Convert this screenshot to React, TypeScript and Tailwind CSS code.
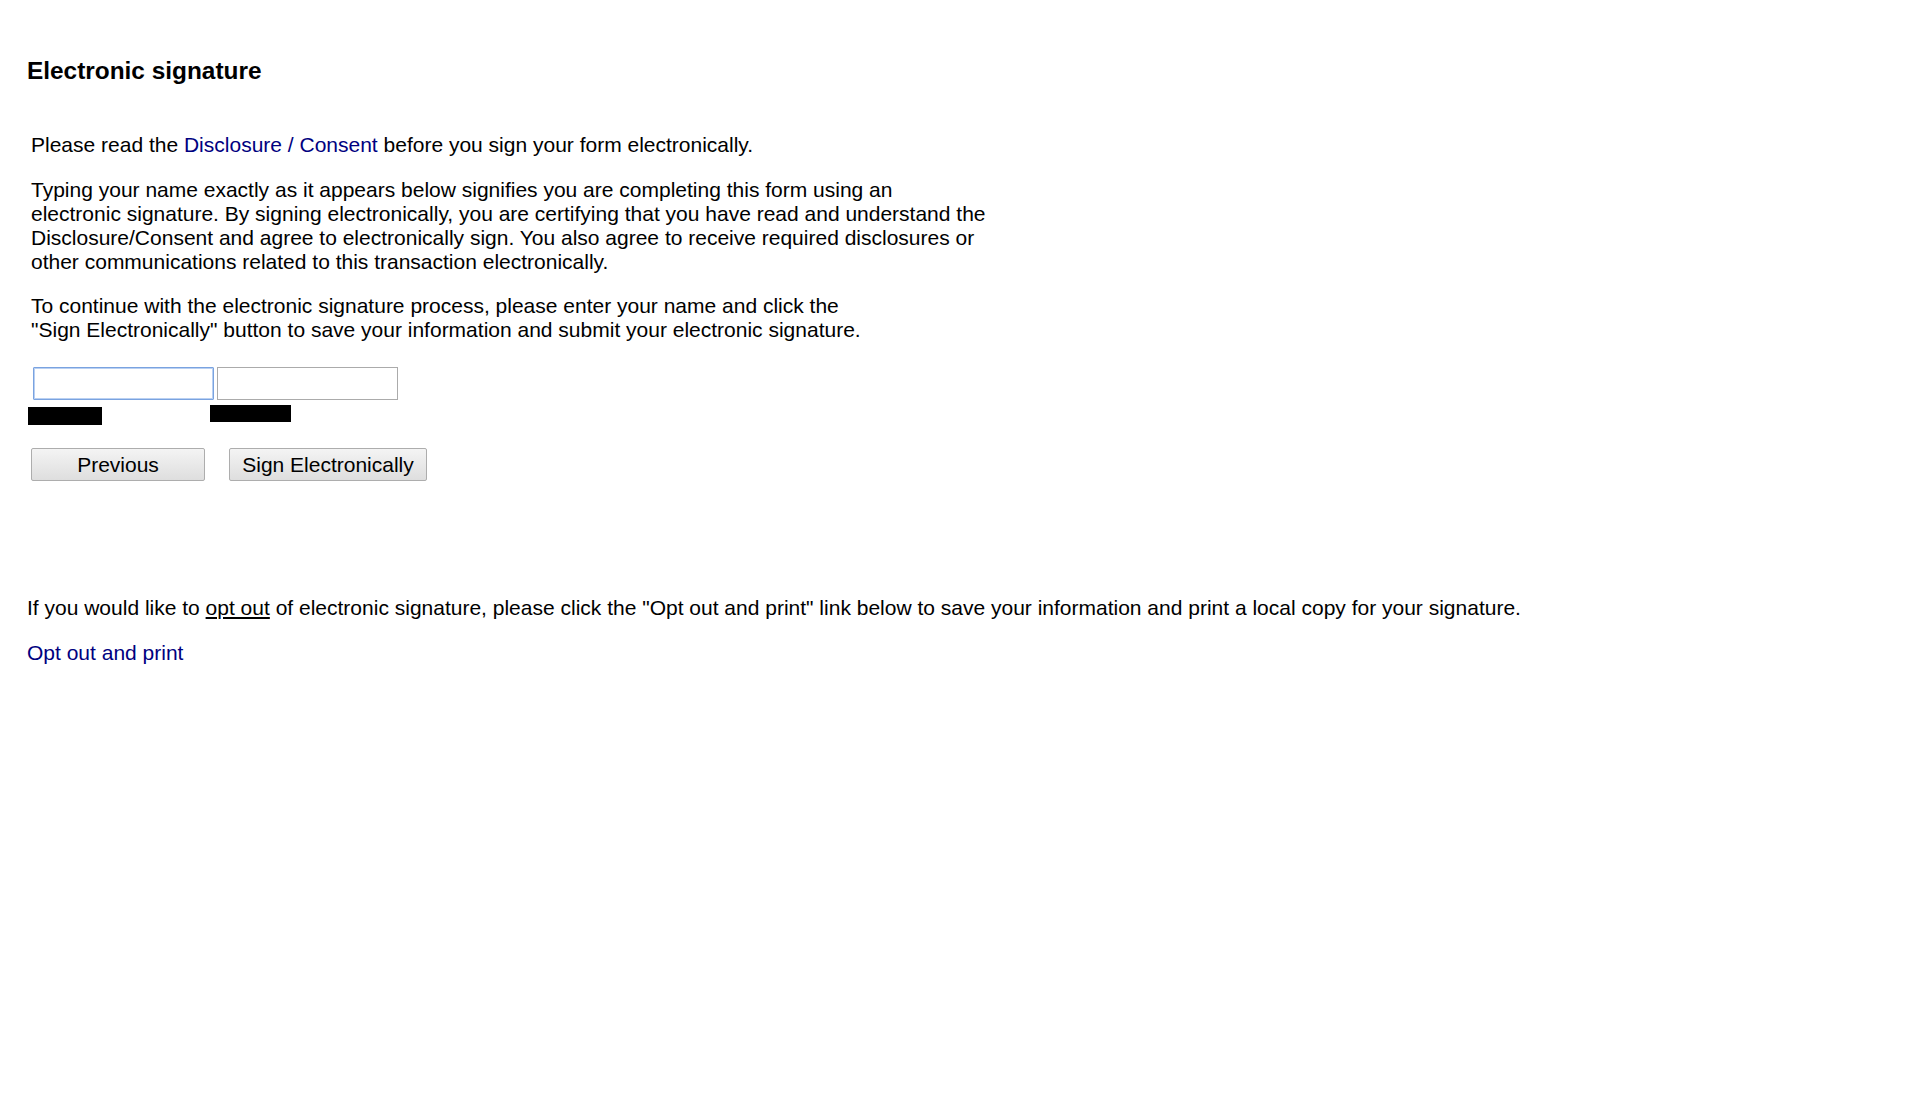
export default function App() {
  return (
    <div className="min-h-[1115px] bg-white text-black font-['Liberation_Sans',Arial,sans-serif] text-[21px] leading-[24px]">
      <div className="pl-[27px] pt-[57px]">
        <h2 className="text-[24.4px] leading-[28px] font-bold">Electronic signature</h2>

        <div className="pl-[4px] pt-[48px]">
          <p>
            Please read the{" "}
            <a className="text-[#000080]">Disclosure / Consent</a> before you sign your form electronically.
          </p>
          <p className="mt-[21px]">
            Typing your name exactly as it appears below signifies you are completing this form using an
            <br />
            electronic signature. By signing electronically, you are certifying that you have read and understand the
            <br />
            Disclosure/Consent and agree to electronically sign. You also agree to receive required disclosures or
            <br />
            other communications related to this transaction electronically.
          </p>
          <p className="mt-[20px]">
            To continue with the electronic signature process, please enter your name and click the
            <br />
            "Sign Electronically" button to save your information and submit your electronic signature.
          </p>

          <div className="mt-[25px] flex items-start gap-[3px] pl-[2px]">
            <div className="flex flex-col">
              <input
                type="text"
                className="w-[181px] h-[33px] border border-[#7aa3e0] shadow-[inset_0_0_0_1px_#b9d0f2] rounded-[1px] outline-none px-1"
              />
              <div className="ml-[-5px] mt-[7px] w-[74px] h-[18px] bg-black" />
            </div>
            <div className="flex flex-col">
              <input
                type="text"
                className="w-[181px] h-[33px] border border-[#ababab] outline-none px-1"
              />
              <div className="ml-[-7px] mt-[5px] w-[81px] h-[17px] bg-black" />
            </div>
          </div>

          <div className="mt-[23px] flex gap-[24px]">
            <button className="w-[174px] h-[33px] border border-[#adadad] rounded-[2px] bg-linear-to-b from-[#f4f4f4] to-[#dedede] text-[21px] leading-none text-black">
              Previous
            </button>
            <button className="w-[198px] h-[33px] border border-[#adadad] rounded-[2px] bg-linear-to-b from-[#f4f4f4] to-[#dedede] text-[21px] leading-none text-black">
              Sign Electronically
            </button>
          </div>
        </div>

        <p className="mt-[115px]">
          If you would like to <span className="underline">opt out</span> of electronic signature, please click the "Opt out and print" link below to save your information and print a local copy for your signature.
        </p>
        <p className="mt-[21px]">
          <a className="text-[#000080]">Opt out and print</a>
        </p>
      </div>
    </div>
  );
}
